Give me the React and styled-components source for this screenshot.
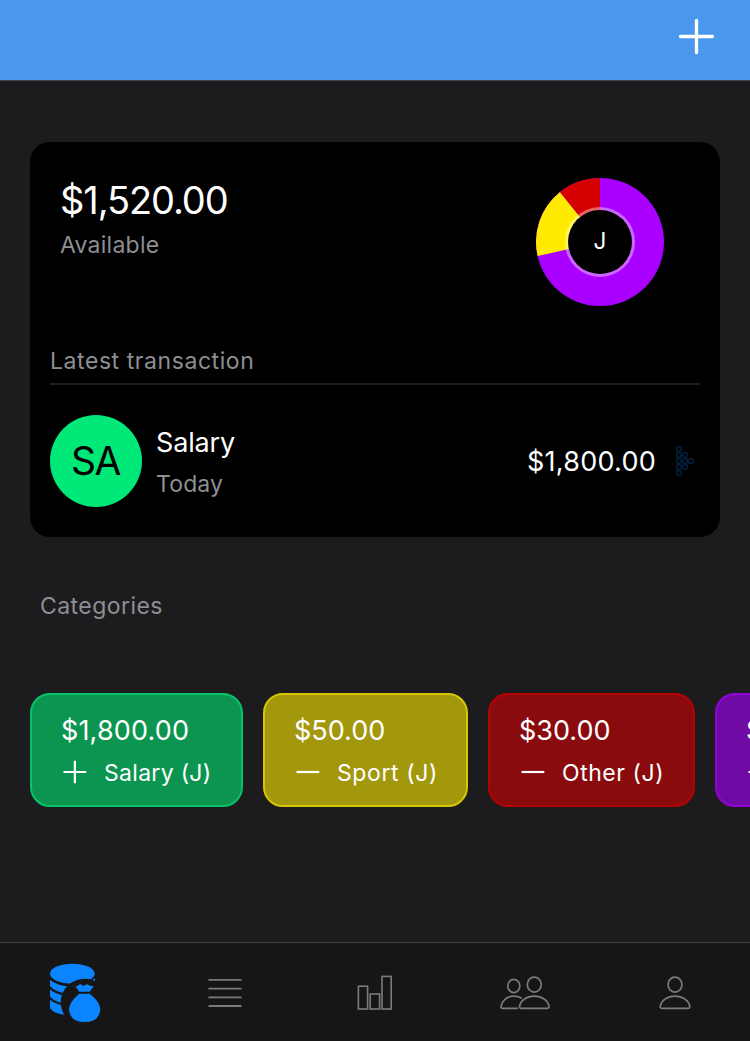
import React from "react";
import styled, { createGlobalStyle } from "styled-components";

const GlobalStyle = createGlobalStyle`
  * { box-sizing: border-box; }
  body {
    margin: 0;
    background: #1c1c1e;
    font-family: Inter, "Liberation Sans", sans-serif;
    overflow: hidden;
  }
`;

const Screen = styled.div`
  display: flex;
  flex-direction: column;
  width: 750px;
  height: 1041px;
  overflow: hidden;
  background: #1c1c1e;
  color: #fff;
`;

const Header = styled.header`
  display: flex;
  justify-content: flex-end;
  align-items: flex-start;
  flex: none;
  height: 81px;
  padding: 16px 33px 0 0;
  background: #4a98ee;
  border-bottom: 1px solid #45474b;
`;

const IconButton = styled.button`
  display: flex;
  padding: 0;
  border: 0;
  background: none;
  color: #fff;
`;

const Content = styled.main`
  flex: 1;
  min-height: 0;
  overflow: hidden;
  padding: 61px 0 0 30px;
`;

const Card = styled.section`
  width: 690px;
  height: 395px;
  padding: 35px 20px 30px;
  border-radius: 20px;
  background: #000;
`;

const Summary = styled.div`
  display: flex;
  justify-content: space-between;
  align-items: flex-start;
  height: 170px;
  padding: 0 35px 0 10px;
`;

const Balance = styled.div`
  font-size: 38px;
  line-height: 46px;
  letter-spacing: -1.1px;
`;

const Caption = styled.div`
  font-size: 23px;
  line-height: 28px;
  letter-spacing: ${(p) => p.$tracking || 0}px;
  color: #8e8e93;
`;

const BalanceBlock = styled.div`
  display: flex;
  flex-direction: column;
  gap: 8px;
`;

const LatestHeading = styled.div`
  padding-bottom: 8px;
  border-bottom: 2px solid #1d1d1f;
`;

const Transaction = styled.div`
  display: flex;
  align-items: center;
  height: 92px;
  margin-top: 30px;
`;

const Avatar = styled.div`
  display: flex;
  align-items: center;
  justify-content: center;
  width: 92px;
  height: 92px;
  padding-right: 1px;
  border-radius: 50%;
  background: #00e878;
  color: #000;
  font-size: 39px;
  line-height: 46px;
  letter-spacing: -1.5px;
`;

const TransactionText = styled.div`
  display: flex;
  flex-direction: column;
  gap: 11px;
  flex: 1;
  padding: 2px 0 0 14px;
`;

const ItemText = styled.div`
  font-size: 27px;
  line-height: 33px;
  letter-spacing: ${(p) => p.$tracking || 0}px;
`;

const ArrowSlot = styled.div`
  display: flex;
  padding: 0 6px 0 20px;
`;

const SectionTitle = styled.div`
  padding: 55px 0 73px 10px;
`;

const Chips = styled.div`
  display: flex;
  gap: 20px;
`;

const Chip = styled.div`
  flex: none;
  width: ${(p) => p.$width}px;
  height: 114px;
  padding: 19px 0 0 29px;
  border: 2px solid ${(p) => p.$edge};
  border-radius: 20px;
  background: ${(p) => p.$fill};
`;

const ChipLabel = styled.div`
  display: flex;
  gap: 15px;
  margin-top: 12px;
  font-size: 23px;
  line-height: 28px;
  letter-spacing: ${(p) => p.$tracking}px;
  white-space: nowrap;
`;

const TabBar = styled.nav`
  display: grid;
  grid-template-columns: repeat(5, 1fr);
  flex: none;
  height: 99px;
  border-top: 1px solid #434346;
  background: #161616;
`;

const Tab = styled.div`
  display: flex;
  justify-content: center;
  padding-top: 17px;
  color: ${(p) => (p.$active ? "#0a84ff" : "#7b7b7b")};
`;

function Donut() {
  return (
    <svg width="130" height="130" viewBox="-65 -65 130 130">
      <circle r="64" fill="#aa00ff" />
      <path d="M0 0L-62.4 14.1A64 64 0 0 1 -40 -50Z" fill="#ffea00" />
      <path d="M0 0L-40 -50A64 64 0 0 1 0 -64Z" fill="#d50000" />
      <circle r="35" fill="#fff" fillOpacity="0.4" />
      <circle r="32" fill="#000" />
      <text x="0" y="7" textAnchor="middle" fill="#fff" fontSize="22.5">J</text>
    </svg>
  );
}

function SignIcon({ plus }) {
  return (
    <svg width="28" height="26" viewBox="0 0 28 26" fill="none" stroke="#fff" strokeWidth="2.2">
      <path d={plus ? "M2.5 13H25.3M13.9 1.8V24.2" : "M2.5 13H25.3"} />
    </svg>
  );
}

const arrowDots = [
  [3, 3], [3, 9], [3, 15], [3, 21], [3, 27],
  [9, 9], [9, 15], [9, 21],
  [15, 15],
];

function DottedArrow() {
  return (
    <svg width="18" height="30" viewBox="0 0 18 30" fill="none" stroke="#03203c" strokeWidth="1.4">
      {arrowDots.map(([x, y]) => (
        <rect key={`${x}-${y}`} x={x - 2.3} y={y - 2.3} width="4.6" height="4.6" rx="1.4" />
      ))}
    </svg>
  );
}

function MoneyIcon() {
  return (
    <svg width="90" height="66" viewBox="0 90 270 198" fill="currentColor">
      <mask id="bag-gap" maskUnits="userSpaceOnUse" x="0" y="88" width="330" height="198">
        <rect y="88" width="330" height="198" fill="#fff" />
        <ellipse cx="165" cy="217" rx="73" ry="71" fill="#000" />
        <path
          d="M55 138C66 157 98 166 127 166S184 157 199 138M55 167C64 182 82 192 125 197M55 198C64 213 82 223 125 228"
          fill="none"
          stroke="#000"
          strokeWidth="7"
        />
      </mask>
      <g mask="url(#bag-gap)">
        <ellipse cx="127" cy="131" rx="67" ry="30" />
        <path d="M60 140C72 160 98 168 127 168L127 258C92 254 60 246 60 230Z" />
      </g>
      <path d="M188 149L195 145V152H191Z" />
      <path d="M135 167Q141 171 146 165Q151 161 156 165Q161 169 166 165Q171 161 176 165Q183 170 192 167L179 185H148Z" />
      <path d="M148 191H179Q211 216 211 239Q208 276 164 276Q120 276 117 239Q117 216 148 191Z" />
    </svg>
  );
}

function ListIcon() {
  return (
    <svg width="36" height="66" viewBox="0 0 36 66" stroke="currentColor" strokeWidth="1.8">
      <path d="M1.5 19.8H34.5M1.5 28.6H34.5M1.5 37.3H34.5M1.5 46H34.5" />
    </svg>
  );
}

function BarsIcon() {
  return (
    <svg width="36" height="66" viewBox="0 0 36 66" fill="none" stroke="currentColor" strokeWidth="1.6">
      <rect x="1.4" y="26.2" width="9.2" height="22.8" />
      <rect x="13.2" y="34" width="9.4" height="15" />
      <rect x="25" y="16.4" width="9.2" height="32.6" />
    </svg>
  );
}

const bustPath =
  "M-13.2 48.3C-14.6 48.3-15 47.4-14.7 46C-13.8 41-8 36.1 0 36.1S13.8 41 14.7 46C15 47.4 14.6 48.3 13.2 48.3Z";

function PeopleIcon() {
  return (
    <svg width="52" height="66" viewBox="0 0 52 66" fill="none" stroke="currentColor" strokeWidth="1.7">
      <ellipse cx="14.8" cy="26" rx="6" ry="6.6" />
      <path d="M19 48.3H3.5C2.2 48.3 1.9 47.5 2.1 46.3C3 40.7 8 36.1 14.8 36.1C18 36.1 20.8 37 23 38.4" />
      <ellipse cx="35.3" cy="24.6" rx="7" ry="7.5" />
      <path transform="translate(35.3 0)" d={bustPath} />
    </svg>
  );
}

function PersonIcon() {
  return (
    <svg width="34" height="66" viewBox="-17 0 34 66" fill="none" stroke="currentColor" strokeWidth="1.7">
      <ellipse cx="0" cy="24.6" rx="7" ry="7.5" />
      <path d={bustPath} />
    </svg>
  );
}

const categories = [
  { amount: "$1,800.00", name: "Salary (J)", plus: true, width: 213, edge: "#07c266", fill: "#0c9550", amountTracking: 0.15, tracking: 0.3 },
  { amount: "$50.00", name: "Sport (J)", width: 205, edge: "#d6c604", fill: "#a3970c", amountTracking: 0, tracking: 0.6 },
  { amount: "$30.00", name: "Other (J)", width: 207, edge: "#b50304", fill: "#8a0b0d", amountTracking: 0, tracking: 0.55 },
  { amount: "$200.00", name: "Food (J)", width: 205, edge: "#9102d9", fill: "#6f0aa4", amountTracking: 0, tracking: 0.6 },
];

export default function App() {
  return (
    <Screen>
      <GlobalStyle />
      <Header>
        <IconButton aria-label="Add">
          <svg width="41" height="41" viewBox="0 0 41 41" stroke="#fff" strokeWidth="3.3" strokeLinecap="round">
            <path d="M4.5 20.5H36.5M20.5 4.5V36.5" />
          </svg>
        </IconButton>
      </Header>
      <Content>
        <Card>
          <Summary>
            <BalanceBlock>
              <Balance>$1,520.00</Balance>
              <Caption $tracking={0.25}>Available</Caption>
            </BalanceBlock>
            <Donut />
          </Summary>
          <LatestHeading>
            <Caption $tracking={0.57}>Latest transaction</Caption>
          </LatestHeading>
          <Transaction>
            <Avatar>SA</Avatar>
            <TransactionText>
              <ItemText $tracking={-0.15}>Salary</ItemText>
              <Caption $tracking={0.15}>Today</Caption>
            </TransactionText>
            <ItemText $tracking={0.25}>$1,800.00</ItemText>
            <ArrowSlot>
              <DottedArrow />
            </ArrowSlot>
          </Transaction>
        </Card>
        <SectionTitle>
          <Caption $tracking={0.44}>Categories</Caption>
        </SectionTitle>
        <Chips>
          {categories.map((c) => (
            <Chip key={c.name} $width={c.width} $edge={c.edge} $fill={c.fill}>
              <ItemText $tracking={c.amountTracking}>{c.amount}</ItemText>
              <ChipLabel $tracking={c.tracking}>
                <SignIcon plus={c.plus} />
                {c.name}
              </ChipLabel>
            </Chip>
          ))}
        </Chips>
      </Content>
      <TabBar>
        <Tab $active><MoneyIcon /></Tab>
        <Tab><ListIcon /></Tab>
        <Tab><BarsIcon /></Tab>
        <Tab><PeopleIcon /></Tab>
        <Tab><PersonIcon /></Tab>
      </TabBar>
    </Screen>
  );
}
